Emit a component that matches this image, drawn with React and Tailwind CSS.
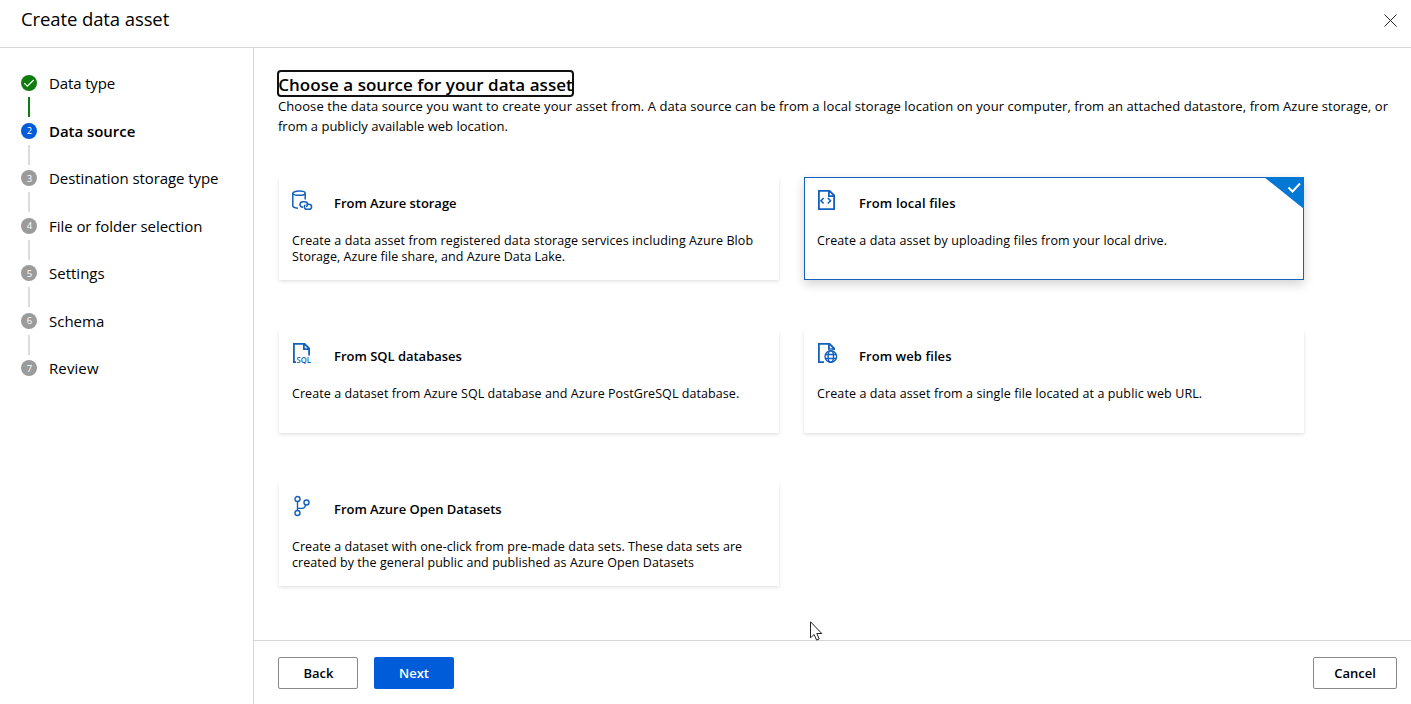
const steps = [
  { label: "Data type", state: "done", track: "tracking-[-0.13px]" },
  { label: "Data source", state: "current", track: "tracking-[-0.05px]" },
  { label: "Destination storage type", state: "todo", track: "tracking-[-0.08px]" },
  { label: "File or folder selection", state: "todo", track: "tracking-[-0.05px]" },
  { label: "Settings", state: "todo", track: "tracking-normal" },
  { label: "Schema", state: "todo", track: "tracking-normal" },
  { label: "Review", state: "todo", track: "tracking-[0.1px]" },
];

const circleColor = { done: "bg-[#107c10]", current: "bg-[#015cda]", todo: "bg-[#9b9b9b]" };

function FileOutline({ d }) {
  return (
    <>
      <path d={d} fill="none" stroke="#1360bd" strokeWidth="1.8" />
      <path d="M11 1h2l5 5v2h-7z" fill="#1360bd" />
      <path d="M12.8 3.6v2.7h2.7z" fill="#fff" />
    </>
  );
}

function StorageIcon() {
  return (
    <svg width="22" height="22" viewBox="0 0 22 22" fill="none" stroke="#1360bd" strokeWidth="1.5">
      <ellipse cx="7" cy="4.2" rx="6.2" ry="2.1" />
      <path d="M.8 4.2v12.6c0 1.2 2 2.200 5.200 2.400M13.200 4.200v6.300" />
      <path d="M11 18.200c-2 0-3-1.200-3-2.700s1.200-2.800 2.900-2.800h1.600c1.900 0 3 1.300 3 2.700 0 1-.5 1.900-1.400 2.300" />
      <path d="M14.500 15.200h2.300c1.700 0 2.800 1.100 2.800 2.500s-1.100 2.600-2.800 2.600h-1.600c-1.800 0-2.900-1.200-2.900-2.600 0-.8.4-1.500 1-1.900" />
    </svg>
  );
}

function CodeFileIcon() {
  return (
    <svg width="22" height="22" viewBox="0 0 22 22">
      <FileOutline d="M12 1.900H1.900v18.200h15.200V7" />
      <path d="M6.600 9 4 11.800l2.600 2.700M10.800 9l2.700 2.800-2.700 2.700" fill="none" stroke="#1360bd" strokeWidth="1.600" />
    </svg>
  );
}

function SqlFileIcon() {
  return (
    <svg width="22" height="22" viewBox="0 0 22 22">
      <FileOutline d="M12 1.900H1.900v18.200H4M17.100 7v6.500" />
      <text x="4.500" y="20.500" fontFamily="Open Sans, sans-serif" fontSize="8" fontWeight="600" textLength="14.500" lengthAdjust="spacingAndGlyphs" fill="#1360bd">SQL</text>
    </svg>
  );
}

function WebFileIcon() {
  return (
    <svg width="22" height="22" viewBox="0 0 22 22">
      <FileOutline d="M12 1.900H1.900v18.200H7" />
      <circle cx="13.800" cy="14.500" r="7" fill="#fff" />
      <g fill="none" stroke="#1360bd" strokeWidth="1.400">
        <circle cx="13.800" cy="14.500" r="5.800" />
        <ellipse cx="13.800" cy="14.500" rx="2.700" ry="5.800" />
        <path d="M8.500 12.500h10.600M8.500 16.500h10.600" />
      </g>
    </svg>
  );
}

function BranchIcon() {
  return (
    <svg width="22" height="22" viewBox="0 0 22 22" fill="none" stroke="#1360bd" strokeWidth="1.400">
      <circle cx="5.500" cy="4" r="2.500" />
      <circle cx="5.500" cy="18" r="2.500" />
      <circle cx="14.500" cy="7.500" r="2.500" />
      <path d="M5.500 6.500v9M5.500 13.400h4.500c2 0 3.300-1.300 3.600-3.500" />
    </svg>
  );
}

const cards = [
  {
    title: "From Azure storage", Icon: StorageIcon, titleTrack: "tracking-[-0.03px]",
    lines: [
      ["Create a data asset from registered data storage services including Azure Blob", "tracking-[0.090px]"],
      ["Storage, Azure file share, and Azure Data Lake.", "tracking-[0.040px]"],
    ],
  },
  {
    title: "From local files", Icon: CodeFileIcon, selected: true, titleTrack: "tracking-[0.13px]",
    lines: [["Create a data asset by uploading files from your local drive.", "tracking-[0.1px]"]],
  },
  {
    title: "From SQL databases", Icon: SqlFileIcon, titleTrack: "tracking-[-0.02px]",
    lines: [["Create a dataset from Azure SQL database and Azure PostGreSQL database.", "tracking-[0.07px]"]],
  },
  {
    title: "From web files", Icon: WebFileIcon, titleTrack: "tracking-[0.07px]",
    lines: [["Create a data asset from a single file located at a public web URL.", "tracking-[0.11px]"]],
  },
  {
    title: "From Azure Open Datasets", Icon: BranchIcon, titleTrack: "tracking-[-0.03px]",
    lines: [
      ["Create a dataset with one-click from pre-made data sets. These data sets are", "tracking-[0.07px]"],
      ["created by the general public and published as Azure Open Datasets", "tracking-[0.065px]"],
    ],
  },
];

function Card({ title, Icon, selected, titleTrack, lines }) {
  return (
    <div
      className={
        "relative h-[103px] w-[500px] bg-white " +
        (selected
          ? "border border-[#1360bd] px-3 pt-[11px] shadow-[0_4px_10px_rgba(0,0,0,0.18)]"
          : "px-[13px] pt-3 shadow-[0_1.6px_3.6px_rgba(0,0,0,0.13),0_0.3px_0.9px_rgba(0,0,0,0.1)]")
      }
    >
      <div className="flex h-11 gap-5">
        <Icon />
        <h2 className={"pt-[5px] text-[13px] leading-[18px] font-semibold whitespace-nowrap " + titleTrack}>{title}</h2>
      </div>
      <div className="text-[12.5px] leading-4 whitespace-nowrap">
        {lines.map(([text, track]) => (
          <p key={text} className={track}>{text}</p>
        ))}
      </div>
      {selected && (
        <svg className="absolute -top-px -right-px" width="40" height="32" viewBox="0 0 40 32">
          <path d="M0 0h40v32z" fill="#0078d4" />
          <path d="M24.500 10.500l4 4 7.500-8" fill="none" stroke="#fff" strokeWidth="2" />
        </svg>
      )}
    </div>
  );
}

function Steps() {
  return (
    <nav className="w-[254px] shrink-0 border-r border-[#d6d6d6] pt-[27px] pl-[21px]">
      {steps.map((s, i) => (
        <div key={s.label} className="flex h-[47.5px] gap-3">
          <div className="flex w-4 flex-col items-center gap-1.5">
            <div className={"flex size-4 shrink-0 items-center justify-center rounded-full text-[9.5px] leading-4 text-white " + circleColor[s.state]}>
              {s.state === "done" ? (
                <svg width="16" height="16" viewBox="0 0 16 16" fill="none" stroke="#fff" strokeWidth="1.200">
                  <path d="M3.300 8.200l3 3L12.700 5" />
                </svg>
              ) : (
                <span className="pt-px pl-px">{i + 1}</span>
              )}
            </div>
            {i < steps.length - 1 && (
              <div className={"h-5 w-0.5 shrink-0 " + (s.state === "done" ? "bg-[#107c10]" : "bg-[#dcdcdc]")} />
            )}
          </div>
          <span className={"text-[15px] leading-[17px] whitespace-nowrap " + s.track + (s.state === "current" ? " font-semibold" : "")}>
            {s.label}
          </span>
        </div>
      ))}
    </nav>
  );
}

export default function App() {
  return (
    <div className="relative flex h-[704px] w-[1411px] flex-col overflow-hidden bg-white font-['Open_Sans',sans-serif] text-black">
      <header className="flex h-12 shrink-0 items-start justify-between border-b border-[#d6d6d6] pr-[14px] pl-[21px]">
        <h1 className="pt-[7px] text-[18.5px] leading-6 tracking-[-0.1px]">Create data asset</h1>
        <svg className="mt-[14px]" width="13" height="13" viewBox="0 0 13 13" stroke="#222" strokeWidth="1">
          <path d="M.5.5l12 12M12.500.5l-12 12" />
        </svg>
      </header>
      <div className="flex min-h-0 flex-1">
        <Steps />
        <div className="flex flex-1 flex-col">
          <main className="flex-1 pt-[22px] pl-6">
            <h2 className="-ml-px flex h-[27px] w-[297px] items-center justify-center rounded-[4px] border-2 border-[#111] pt-0.5 text-[17px] leading-[23px] font-semibold tracking-[0.04px] whitespace-nowrap">
              Choose a source for your data asset
            </h2>
            <div className="-mt-px text-[13px] leading-5 whitespace-nowrap">
              <p className="tracking-[0.08px]">
                Choose the data source you want to create your asset from. A data source can be from a local storage location on your computer, from an attached datastore, from Azure storage, or
              </p>
              <p className="tracking-[-0.01px]">from a publicly available web location.</p>
            </div>
            <div className="mt-[41px] ml-px grid w-[1025px] grid-cols-2 gap-x-[25px] gap-y-[50px]">
              {cards.map((c) => (
                <Card key={c.title} {...c} />
              ))}
            </div>
          </main>
          <footer className="flex h-16 shrink-0 items-start gap-4 border-t border-[#d6d6d6] pt-4 pr-[14px] pl-6 text-[13px] font-semibold">
            <button className="h-8 w-20 rounded-[2px] border border-[#8a8886] pt-0.5 pl-px">Back</button>
            <button className="h-8 w-20 rounded-[2px] bg-[#015cda] pt-0.5 text-white">Next</button>
            <button className="ml-auto h-8 w-[84px] rounded-[2px] border border-[#8a8886] pt-0.5">Cancel</button>
          </footer>
        </div>
      </div>
      <svg className="absolute top-[621px] left-[810px]" width="13" height="20" viewBox="0 0 13 20">
        <path d="M.5.800v16l3.600-3.300 2.500 5.600 2.600-1.100-2.400-5.500h5z" fill="#fff" stroke="#222" />
      </svg>
    </div>
  );
}
